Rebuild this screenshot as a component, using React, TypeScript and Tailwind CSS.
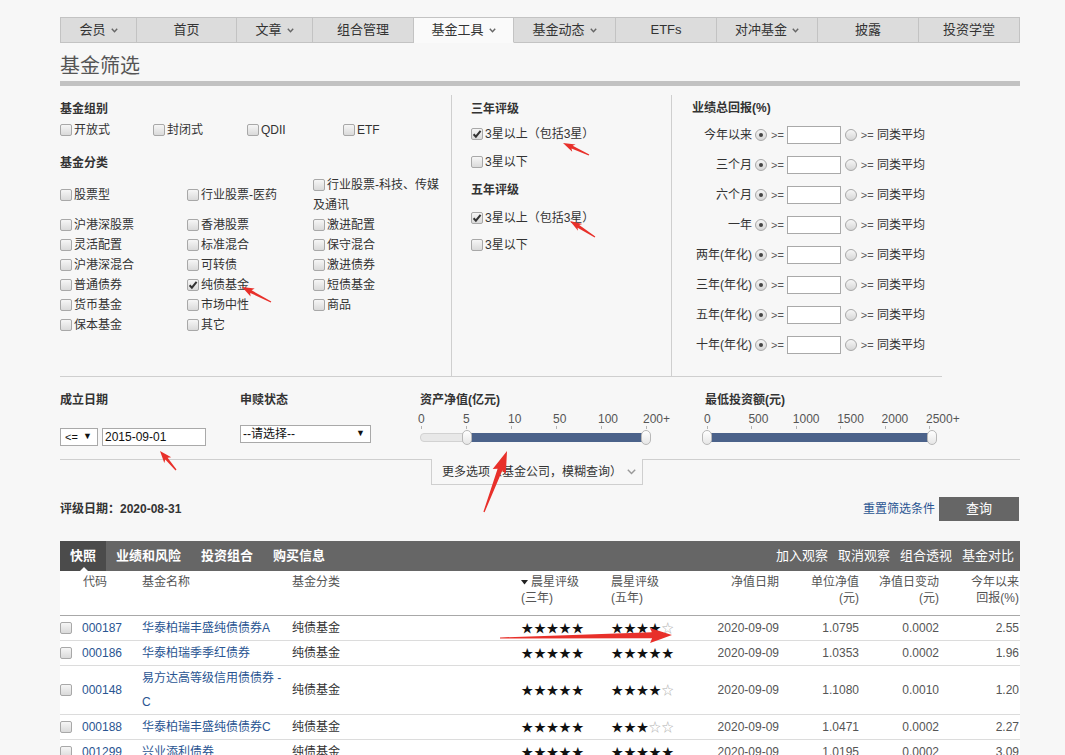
import React from "react";

const FONT = "font-['Liberation_Sans','Noto_Sans_CJK_SC',sans-serif]";

function Chevron({ color = "#666" }: { color?: string }) {
  return (
    <svg width="7" height="5" viewBox="0 0 7 5" className="ml-[5px] inline-block">
      <path d="M0.8 0.8 L3.5 3.8 L6.2 0.8" fill="none" stroke={color} strokeWidth="1.4" />
    </svg>
  );
}

function Checkbox({ checked = false }: { checked?: boolean }) {
  return (
    <span className="relative mr-[2px] inline-block h-[12px] w-[12px] shrink-0 rounded-[2px] border border-[#a8a8a8] bg-linear-to-b from-[#f6f6f6] to-[#dadada] align-[-2px]">
      {checked && (
        <svg viewBox="0 0 12 12" className="absolute left-[-1px] top-[-1px] h-[12px] w-[12px]">
          <path d="M2.6 6.2 L4.9 8.7 L9.6 2.9" fill="none" stroke="#333" strokeWidth="2" />
        </svg>
      )}
    </span>
  );
}

function Radio({ checked = false }: { checked?: boolean }) {
  return (
    <span className="inline-flex h-[12px] w-[12px] shrink-0 items-center justify-center rounded-full border border-[#a8a8a8] bg-linear-to-b from-[#f6f6f6] to-[#d6d6d6]">
      {checked && <span className="h-[4px] w-[4px] rounded-full bg-[#444]" />}
    </span>
  );
}

const nav = [
  { t: "会员", w: 77, c: true },
  { t: "首页", w: 100 },
  { t: "文章", w: 76, c: true },
  { t: "组合管理", w: 101 },
  { t: "基金工具", w: 100, c: true, a: true },
  { t: "基金动态", w: 102, c: true },
  { t: "ETFs", w: 101 },
  { t: "对冲基金", w: 101, c: true },
  { t: "披露", w: 101 },
  { t: "投资学堂", w: 101 },
];

const categories: { t: string; c?: boolean }[][] = [
  [{ t: "股票型" }, { t: "行业股票-医药" }, { t: "行业股票-科技、传媒及通讯" }],
  [{ t: "沪港深股票" }, { t: "香港股票" }, { t: "激进配置" }],
  [{ t: "灵活配置" }, { t: "标准混合" }, { t: "保守混合" }],
  [{ t: "沪港深混合" }, { t: "可转债" }, { t: "激进债券" }],
  [{ t: "普通债券" }, { t: "纯债基金", c: true }, { t: "短债基金" }],
  [{ t: "货币基金" }, { t: "市场中性" }, { t: "商品" }],
  [{ t: "保本基金" }, { t: "其它" }],
];

const perf = ["今年以来", "三个月", "六个月", "一年", "两年(年化)", "三年(年化)", "五年(年化)", "十年(年化)"];

function Slider({
  labels,
  step,
  first,
  trackW,
  lo,
  hi,
}: {
  labels: string[];
  step: number;
  first: number;
  trackW: number;
  lo: number;
  hi: number;
}) {
  return (
    <div className="relative h-[36px] w-[262px]">
      {labels.map((l, i) => (
        <React.Fragment key={l}>
          <span
            className="absolute top-0 text-[12px] leading-[14px] text-[#555]"
            style={{ left: first + step * i }}
          >
            {l}
          </span>
          <span className="absolute top-[14px] h-[3px] w-px bg-[#b5b5b5]" style={{ left: first + step * i + 3 }} />
        </React.Fragment>
      ))}
      <div
        className="absolute top-[21px] h-[9px] rounded-[4px] border border-[#d2d2d2] bg-[#e8e8e8]"
        style={{ left: 0, width: trackW }}
      />
      <div className="absolute top-[21px] h-[9px] bg-[#4b628a]" style={{ left: lo, width: hi - lo }} />
      {[lo, hi].map((c, i) => (
        <span
          key={i}
          className="absolute top-[18px] h-[15px] w-[10px] rounded-full border border-[#b8b8b8] bg-linear-to-b from-white to-[#e6e6e6]"
          style={{ left: c - 5 }}
        />
      ))}
    </div>
  );
}

function Stars({ n }: { n: number }) {
  return (
    <div className="flex h-[24px] items-center font-['Noto_Sans_CJK_SC',sans-serif] text-[12px] leading-[14px]">
      {[0, 1, 2, 3, 4].map((i) => (
        <span key={i} className={`inline-block w-[12.6px] text-center ${i < n ? "text-[#111]" : "text-[#b0b0b0]"}`}>
          {i < n ? "★" : "☆"}
        </span>
      ))}
    </div>
  );
}

const rows = [
  { code: "000187", name: "华泰柏瑞丰盛纯债债券A", s3: 5, s5: 4, nav: "1.0795", chg: "0.0002", ret: "2.55" },
  { code: "000186", name: "华泰柏瑞季季红债券", s3: 5, s5: 5, nav: "1.0353", chg: "0.0002", ret: "1.96" },
  { code: "000148", name: "易方达高等级信用债债券 - C", s3: 5, s5: 4, nav: "1.1080", chg: "0.0010", ret: "1.20" },
  { code: "000188", name: "华泰柏瑞丰盛纯债债券C", s3: 5, s5: 3, nav: "1.0471", chg: "0.0002", ret: "2.27" },
  { code: "001299", name: "兴业添利债券", s3: 5, s5: 5, nav: "1.0195", chg: "0.0002", ret: "3.09" },
];

const GRID = "grid grid-cols-[22px_60px_150px_228px_91px_88px_80px_80px_80px_81px]";

type Arrow = { x1: number; y1: number; x2: number; y2: number; bw: number; hw: number; hl: number };

function arrowPts(a: Arrow) {
  const dx = a.x2 - a.x1;
  const dy = a.y2 - a.y1;
  const len = Math.hypot(dx, dy);
  const ux = dx / len;
  const uy = dy / len;
  const nx = -uy;
  const ny = ux;
  const bx = a.x2 - ux * a.hl;
  const by = a.y2 - uy * a.hl;
  const p = (x: number, y: number) => `${x.toFixed(1)},${y.toFixed(1)}`;
  return [
    p(a.x1 + nx * 0.6, a.y1 + ny * 0.6),
    p(bx + (nx * a.bw) / 2, by + (ny * a.bw) / 2),
    p(bx - ux * 2 + (nx * a.hw) / 2, by - uy * 2 + (ny * a.hw) / 2),
    p(a.x2, a.y2),
    p(bx - ux * 2 - (nx * a.hw) / 2, by - uy * 2 - (ny * a.hw) / 2),
    p(bx - (nx * a.bw) / 2, by - (ny * a.bw) / 2),
    p(a.x1 - nx * 0.6, a.y1 - ny * 0.6),
  ].join(" ");
}

const arrows: Arrow[] = [
  { x1: 271, y1: 302, x2: 242, y2: 287, bw: 3, hw: 9, hl: 10 },
  { x1: 589, y1: 155, x2: 563, y2: 143, bw: 3, hw: 8, hl: 10 },
  { x1: 595, y1: 237, x2: 570, y2: 221, bw: 3, hw: 8, hl: 10 },
  { x1: 176, y1: 470, x2: 160, y2: 451, bw: 3, hw: 9, hl: 10 },
  { x1: 484, y1: 512, x2: 507, y2: 451, bw: 5, hw: 14, hl: 20 },
  { x1: 500, y1: 638, x2: 672, y2: 635, bw: 6, hw: 15, hl: 20 },
];

export default function App() {
  return (
    <div className={`relative min-h-[765px] w-full bg-[#f7f7f7] text-[12px] text-[#333] ${FONT}`}>
      <div className="ml-[60px] w-[960px] pt-[17px]">
        {/* Nav */}
        <div className="flex h-[26px]">
          {nav.map((n, i) => (
            <div
              key={n.t}
              className={`flex items-center justify-center border-r border-t border-[#c3c3c3] text-[13px] text-[#333] ${
                i === 0 ? "border-l" : ""
              } ${n.a ? "border-b border-b-transparent bg-[#fafafa]" : "border-b bg-[#dcdcdc]"}`}
              style={{ width: n.w }}
            >
              <span>{n.t}</span>
              {n.c && <Chevron />}
            </div>
          ))}
        </div>

        {/* Title */}
        <div className="mt-[10px] h-[26px] text-[20px] leading-[26px] text-[#555]">基金筛选</div>
        <div className="mt-[2px] h-[5px] bg-[#c2c2c2]" />

        {/* Filters */}
        <div className="mt-[9px] flex h-[282px] w-[882px] border-b border-[#cfcfcf]">
          {/* Left */}
          <div className="w-[391px]">
            <div className="mt-[5px] font-bold leading-[18px]">基金组别</div>
            <div className="mt-[3px] grid h-[18px] grid-cols-[93px_94px_96px_80px] leading-[18px]">
              {["开放式", "封闭式", "QDII", "ETF"].map((t) => (
                <label key={t} className="whitespace-nowrap">
                  <Checkbox />
                  {t}
                </label>
              ))}
            </div>
            <div className="mt-[15px] font-bold leading-[18px]">基金分类</div>
            <div className="mt-[3px] grid grid-cols-[127px_126px_132px] grid-rows-[40px_repeat(6,20px)]">
              {categories.map((r, ri) =>
                r.map((c, ci) => (
                  <div key={`${ri}-${ci}`} className="flex items-center">
                    <label className="leading-[20px]">
                      <Checkbox checked={c.c} />
                      {c.t}
                    </label>
                  </div>
                ))
              )}
            </div>
          </div>

          {/* Middle */}
          <div className="w-[221px] border-x border-[#cfcfcf] pl-[19px]">
            <div className="mt-[5px] font-bold leading-[18px]">三年评级</div>
            <div className="mt-[2px] flex h-[28px] items-center">
              <Checkbox checked />
              <span>3星以上（包括3星）</span>
            </div>
            <div className="flex h-[28px] items-center">
              <Checkbox />
              <span>3星以下</span>
            </div>
            <div className="flex h-[28px] items-center font-bold">五年评级</div>
            <div className="flex h-[27px] items-center">
              <Checkbox checked />
              <span>3星以上（包括3星）</span>
            </div>
            <div className="flex h-[28px] items-center">
              <Checkbox />
              <span>3星以下</span>
            </div>
          </div>

          {/* Right */}
          <div className="w-[270px] pl-[20px]">
            <div className="mt-[4px] font-bold leading-[18px]">业绩总回报(%)</div>
            <div className="mt-[3px]">
              {perf.map((p) => (
                <div key={p} className="flex h-[30px] items-center">
                  <span className="w-[60px] whitespace-nowrap text-right">{p}</span>
                  <span className="ml-[3px] flex">
                    <Radio checked />
                  </span>
                  <span className="ml-[4px] text-[11px] text-[#555]">&gt;=</span>
                  <span className="ml-[3px] h-[18px] w-[54px] border border-[#a9a9a9] bg-white" />
                  <span className="ml-[4px] flex">
                    <Radio />
                  </span>
                  <span className="ml-[4px] whitespace-nowrap">
                    <span className="text-[11px] text-[#555]">&gt;=</span> 同类平均
                  </span>
                </div>
              ))}
            </div>
          </div>
        </div>

        {/* Bottom filters */}
        <div className="flex h-[83px] border-b border-[#cfcfcf]">
          <div className="w-[180px] pt-[14px]">
            <div className="font-bold leading-[18px]">成立日期</div>
            <div className="mt-[19px] flex">
              <div className="flex h-[18px] w-[38px] items-center justify-between border border-[#a9a9a9] bg-white pl-[4px] pr-[5px] text-[#111]">
                <span className="text-[11px]">&lt;=</span>
                <span className="text-[9px]">▼</span>
              </div>
              <div className="ml-[4px] flex h-[18px] w-[104px] items-center border border-[#a9a9a9] bg-white pl-[2px] text-[#111]">
                2015-09-01
              </div>
            </div>
          </div>
          <div className="w-[180px] pt-[14px]">
            <div className="font-bold leading-[18px]">申赎状态</div>
            <div className="mt-[16px] flex h-[18px] w-[131px] items-center justify-between border border-[#a9a9a9] bg-white pl-[2px] pr-[5px] text-[#111]">
              <span>--请选择--</span>
              <span className="text-[9px]">▼</span>
            </div>
          </div>
          <div className="w-[285px] pt-[14px]">
            <div className="font-bold leading-[18px]">资产净值(亿元)</div>
            <div className="mt-[3px]">
              <Slider labels={["0", "5", "10", "50", "100", "200+"]} step={45} first={-2} trackW={230} lo={47} hi={226} />
            </div>
          </div>
          <div className="pt-[14px]">
            <div className="font-bold leading-[18px]">最低投资额(元)</div>
            <div className="mt-[3px]">
              <Slider
                labels={["0", "500", "1000", "1500", "2000", "2500+"]}
                step={44.4}
                first={-1}
                trackW={229}
                lo={2}
                hi={227}
              />
            </div>
          </div>
        </div>

        {/* More options tab */}
        <div className="-mt-px ml-[371px] flex h-[26px] w-[212px] items-center border-x border-b border-[#cfcfcf] bg-[#f7f7f7] pl-[10px]">
          <span>更多选项（基金公司，模糊查询）</span>
          <svg width="9" height="6" viewBox="0 0 9 6" className="ml-[5px]">
            <path d="M0.8 0.8 L4.5 4.6 L8.2 0.8" fill="none" stroke="#999" strokeWidth="1.4" />
          </svg>
        </div>

        {/* Rating date + buttons */}
        <div className="mt-[12px] flex h-[24px] items-center">
          <span className="font-bold">评级日期：2020-08-31</span>
          <span className="ml-auto text-[#2a5592]">重置筛选条件</span>
          <span className="ml-[4px] mr-[1px] flex h-[24px] w-[80px] items-center justify-center bg-[#666] text-[13px] text-white">
            查询
          </span>
        </div>

        {/* Table */}
        <div className="mt-[20px] bg-white">
          <div className="flex h-[30px] items-center bg-[#666] text-[13px] text-white">
            <div className="relative flex h-full items-center bg-[#4b4b4b] px-[10px] font-bold">
              快照
              <span className="absolute bottom-0 left-[20px] h-0 w-0 border-x-[4px] border-b-[4px] border-x-transparent border-b-white" />
            </div>
            <div className="px-[10px] font-bold">业绩和风险</div>
            <div className="px-[10px] font-bold">投资组合</div>
            <div className="px-[10px] font-bold">购买信息</div>
            <div className="ml-auto flex gap-[10px] pr-[6px]">
              <span>加入观察</span>
              <span>取消观察</span>
              <span>组合透视</span>
              <span>基金对比</span>
            </div>
          </div>

          <div className={`${GRID} h-[45px] border-b border-[#a8a8a8] pt-[3px] leading-[16px] text-[#555]`}>
            <div />
            <div className="pl-[1px]">代码</div>
            <div>基金名称</div>
            <div>基金分类</div>
            <div className="pl-[1px]">
              <div className="flex items-center">
                <svg width="7" height="5" viewBox="0 0 7 5" className="mr-[3px]">
                  <path d="M0 0 L7 0 L3.5 4.5 Z" fill="#222" />
                </svg>
                晨星评级
              </div>
              <div>(三年)</div>
            </div>
            <div>
              <div>晨星评级</div>
              <div>(五年)</div>
            </div>
            <div className="text-right">净值日期</div>
            <div className="text-right">
              <div>单位净值</div>
              <div>(元)</div>
            </div>
            <div className="text-right">
              <div>净值日变动</div>
              <div>(元)</div>
            </div>
            <div className="pr-[1px] text-right">
              <div>今年以来</div>
              <div>回报(%)</div>
            </div>
          </div>

          {rows.map((r) => (
            <div key={r.code} className={`${GRID} min-h-[25px] items-center border-b border-[#dcdcdc] leading-[24px]`}>
              <div className="flex h-[24px] items-center">
                <Checkbox />
              </div>
              <div className="text-[#2a5592]">{r.code}</div>
              <div className="pr-[8px] text-[#2a5592]">{r.name}</div>
              <div>纯债基金</div>
              <div className="pl-[1px]">
                <Stars n={r.s3} />
              </div>
              <div>
                <Stars n={r.s5} />
              </div>
              <div className="text-right text-[#555]">2020-09-09</div>
              <div className="text-right text-[#555]">{r.nav}</div>
              <div className="text-right text-[#555]">{r.chg}</div>
              <div className="pr-[1px] text-right text-[#555]">{r.ret}</div>
            </div>
          ))}
        </div>
      </div>

      {/* Annotation arrows */}
      <svg className="pointer-events-none absolute left-0 top-0" width="1065" height="765" viewBox="0 0 1065 765">
        {arrows.map((a, i) => (
          <polygon key={i} points={arrowPts(a)} fill="#e8302a" />
        ))}
      </svg>
    </div>
  );
}
